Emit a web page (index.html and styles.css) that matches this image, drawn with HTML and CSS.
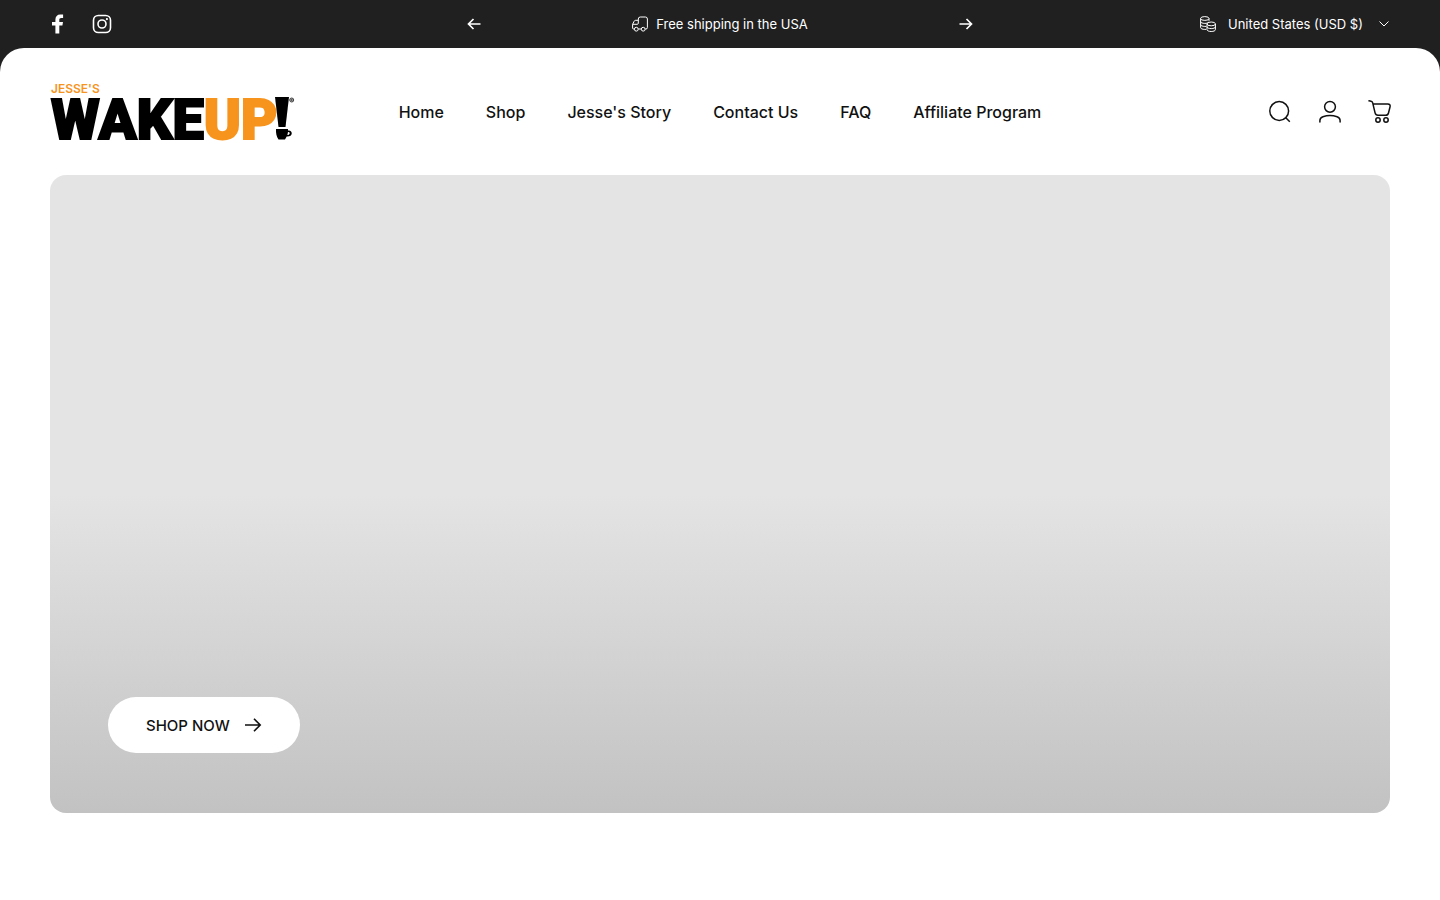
FILE: index.html
```html
<!DOCTYPE html>
<html lang="en">
    <head>
        <meta charset="UTF-8" />
        <meta name="viewport" content="width=device-width, initial-scale=1.0" />
        <title>Jesse's WakeUP!</title>
        <link rel="stylesheet" href="styles.css" />
    </head>
    <body>
        <div class="topbar">
            <div class="social">
                <a href="#" aria-label="Facebook">
                    <svg width="16" height="20" viewBox="0 0 16 20" fill="currentColor">
                        <path d="M5.400 19.500v-8H2V8h3.400V5.600C5.400 2.500 7.200.5 10.300.5h2.800v3.400h-1.900c-1.300 0-1.900.7-1.900 1.900V8H13l-.6 3.500H9.300v8z" />
                    </svg>
                </a>
                <a href="#" aria-label="Instagram">
                    <svg width="20" height="20" viewBox="0 0 20 20" fill="none" stroke="currentColor" stroke-width="1.600">
                        <rect x="1.500" y="1.500" width="17" height="17" rx="4.800" />
                        <circle cx="10" cy="10" r="4" />
                        <circle cx="14.900" cy="5.100" r="1.100" fill="currentColor" stroke="none" />
                    </svg>
                </a>
            </div>
            <div class="announcement">
                <button type="button" aria-label="Previous">
                    <svg width="14" height="12" viewBox="0 0 14 12" fill="none" stroke="currentColor" stroke-width="1.700">
                        <path d="M13.500 6H1.500M6.500 1l-5 5 5 5" />
                    </svg>
                </button>
                <p>
                    <svg width="16" height="16" viewBox="0 0 16 16" fill="none" stroke="currentColor" stroke-linejoin="round">
                        <path d="M2.300 13H1.600A1 1 0 0 1 .6 12V8.300L2.200 5.200Q2.600 4.300 3.600 4.300H6.300M.6 8.300H5.200Q6.300 8.300 6.300 7.200V3Q6.300 1 8.300 1H13.400Q15.400 1 15.400 3V11.500Q15.400 13 14 13H13.200M6.300 13H9.200" />
                        <circle cx="4.300" cy="13.200" r="1.900" />
                        <circle cx="11.200" cy="13.200" r="1.900" />
                    </svg>
                    Free shipping in the USA
                </p>
                <button type="button" aria-label="Next">
                    <svg width="14" height="12" viewBox="0 0 14 12" fill="none" stroke="currentColor" stroke-width="1.700">
                        <path d="M.5 6h12M7.500 1l5 5-5 5" />
                    </svg>
                </button>
            </div>
            <label class="currency">
                <svg width="16" height="16" viewBox="0 0 16 16" fill="none" stroke="currentColor">
                    <ellipse cx="4.800" cy="2.500" rx="4.200" ry="1.900" />
                    <path d="M.6 2.500v9c0 1.100 1.800 1.900 4.200 1.900h1.400M9 2.500v2.400M.6 5.500c0 1.100 1.800 1.900 4.200 1.900 1.900 0 3.500-.5 4.100-1.400M.6 8.500c0 1.100 1.800 1.900 4.200 1.900h1.400" />
                    <ellipse cx="11.200" cy="7.900" rx="4.200" ry="1.900" />
                    <path d="M7 7.900v5.700c0 1.100 1.800 1.900 4.200 1.900s4.200-.8 4.200-1.900V7.900M7 10.700c0 1.100 1.800 1.900 4.200 1.900s4.200-.8 4.200-1.900" />
                </svg>
                <select aria-label="Country and currency">
                    <option>United States (USD $)</option>
                </select>
                <svg width="12" height="8" viewBox="0 0 12 8" fill="none" stroke="currentColor">
                    <path d="M1.500 1.500L6 6l4.500-4.500" />
                </svg>
            </label>
        </div>
        <div class="page">
            <header class="header">
                <a class="logo" href="#" aria-label="Jesse's WakeUP!">
                    <svg width="248" height="90" viewBox="0 -15 248 90">
                        <text class="logo-small" x="3" y="11">JESSE'S</text>
                        <text class="logo-big" x="3" y="57">WAKE<tspan class="orange">UP</tspan></text>
                        <path d="M227 15h14l-3.500 30h-7z" />
                        <path d="M228 47h12v1.500c5-.8 5.500 6.500-1.300 6L237 57.500h-6.500C228.500 55 227.800 51 228 47zM240 50l-.6 3c3 0 3-3.400.6-3z" fill-rule="evenodd" />
                        <circle cx="243.700" cy="18" r="2" fill="#aaa" stroke="#444" />
                        <circle cx="243.700" cy="18" r=".8" fill="#333" />
                    </svg>
                </a>
                <nav class="nav">
                    <a href="#">Home</a>
                    <a href="#">Shop</a>
                    <a href="#">Jesse's Story</a>
                    <a href="#">Contact Us</a>
                    <a href="#">FAQ</a>
                    <a href="#">Affiliate Program</a>
                </nav>
                <div class="tools">
                    <a href="#" aria-label="Search">
                        <svg width="24" height="24" viewBox="0 0 24 24" fill="none" stroke="currentColor" stroke-width="1.500">
                            <circle cx="11.200" cy="11" r="9.400" />
                            <path d="M17.800 17.700l4 4" />
                        </svg>
                    </a>
                    <a href="#" aria-label="Account">
                        <svg width="24" height="24" viewBox="0 0 24 24" fill="none" stroke="currentColor" stroke-width="1.500" stroke-linecap="round">
                            <circle cx="12" cy="6.800" r="5.400" />
                            <path d="M1.900 22v-1.500c0-2 1.200-3.200 3-3.800 4.500-1.400 9.700-1.400 14.200 0 1.800.6 3 1.800 3 3.800V22" />
                        </svg>
                    </a>
                    <a href="#" aria-label="Cart">
                        <svg width="24" height="24" viewBox="0 0 24 24" fill="none" stroke="currentColor" stroke-width="1.500" stroke-linecap="round" stroke-linejoin="round">
                            <path d="M1 .8l2 .4c1 .2 1.500.8 1.700 1.700l2.300 9.700c.4 1.700 1.200 2.700 3 2.700h7.600c1.600 0 2.500-.8 2.900-2.300l1.500-6c.5-1.900-.4-3-2.200-3H5" />
                            <circle cx="10" cy="20" r="2.200" />
                            <circle cx="18" cy="20" r="2.200" />
                        </svg>
                    </a>
                </div>
            </header>
            <main>
                <section class="hero">
                    <a class="btn" href="#">
                        SHOP NOW
                        <svg width="18" height="16" viewBox="0 0 18 16" fill="none" stroke="currentColor" stroke-width="1.600">
                            <path d="M1 8h15.500M10 1.800L16.200 8 10 14.200" />
                        </svg>
                    </a>
                </section>
            </main>
        </div>
    </body>
</html>
```

FILE: styles.css
```css
* {
    box-sizing: border-box;
}
body {
    margin: 0;
    background-color: #202020;
    color: #111;
    font-family: Inter, "Liberation Sans", sans-serif;
}
a {
    color: inherit;
    text-decoration: none;
}
svg {
    display: block;
    flex: none;
}
button {
    padding: 0;
    border: none;
    background: none;
    color: inherit;
    cursor: pointer;
}
.topbar {
    display: grid;
    grid-template-columns: 1fr minmax(0, 516px) 1fr;
    align-items: center;
    height: 48px;
    padding: 0 50px;
    color: #fff;
    font-size: 13px;
}
.social {
    display: flex;
    gap: 26px;
}
.announcement {
    display: flex;
    align-items: center;
    justify-content: space-between;
}
.announcement button {
    display: flex;
    align-items: center;
    justify-content: center;
    width: 24px;
    height: 24px;
}
.announcement p {
    display: flex;
    align-items: center;
    gap: 8px;
    margin: 0;
}
.currency {
    display: flex;
    align-items: center;
    justify-self: end;
    gap: 12px;
}
.currency select {
    appearance: none;
    padding: 0 3px 0 0;
    border: none;
    background: none;
    color: inherit;
    font: inherit;
    cursor: pointer;
}
.page {
    min-height: calc(100vh - 48px);
    padding-bottom: 88px;
    border-radius: 24px 24px 0 0;
    background-color: #fff;
}
.header {
    display: grid;
    grid-template-columns: 1fr auto 1fr;
    align-items: center;
    height: 127px;
    padding: 0 48px;
}
.logo {
    justify-self: start;
}
.logo-small {
    fill: #f7941d;
    font-size: 12px;
    font-weight: 600;
}
.logo-big {
    stroke: #000;
    stroke-width: 2px;
    font-family: Roboto, sans-serif;
    font-size: 56px;
    font-weight: 900;
}
.orange {
    fill: #f7941d;
    stroke: #f7941d;
}
.nav {
    display: flex;
    gap: 42px;
    font-size: 16px;
    font-weight: 500;
}
.tools {
    display: flex;
    justify-self: end;
    gap: 26px;
}
.hero {
    display: flex;
    align-items: flex-end;
    aspect-ratio: 21 / 10;
    margin: 0 50px;
    padding: 60px 58px;
    border-radius: 16px;
    background: linear-gradient(#e4e4e4 50%, #c2c2c2);
}
.btn {
    display: flex;
    align-items: center;
    gap: 14px;
    height: 56px;
    padding: 0 38px;
    border-radius: 28px;
    background-color: #fff;
    font-size: 15px;
    font-weight: 500;
}
```
